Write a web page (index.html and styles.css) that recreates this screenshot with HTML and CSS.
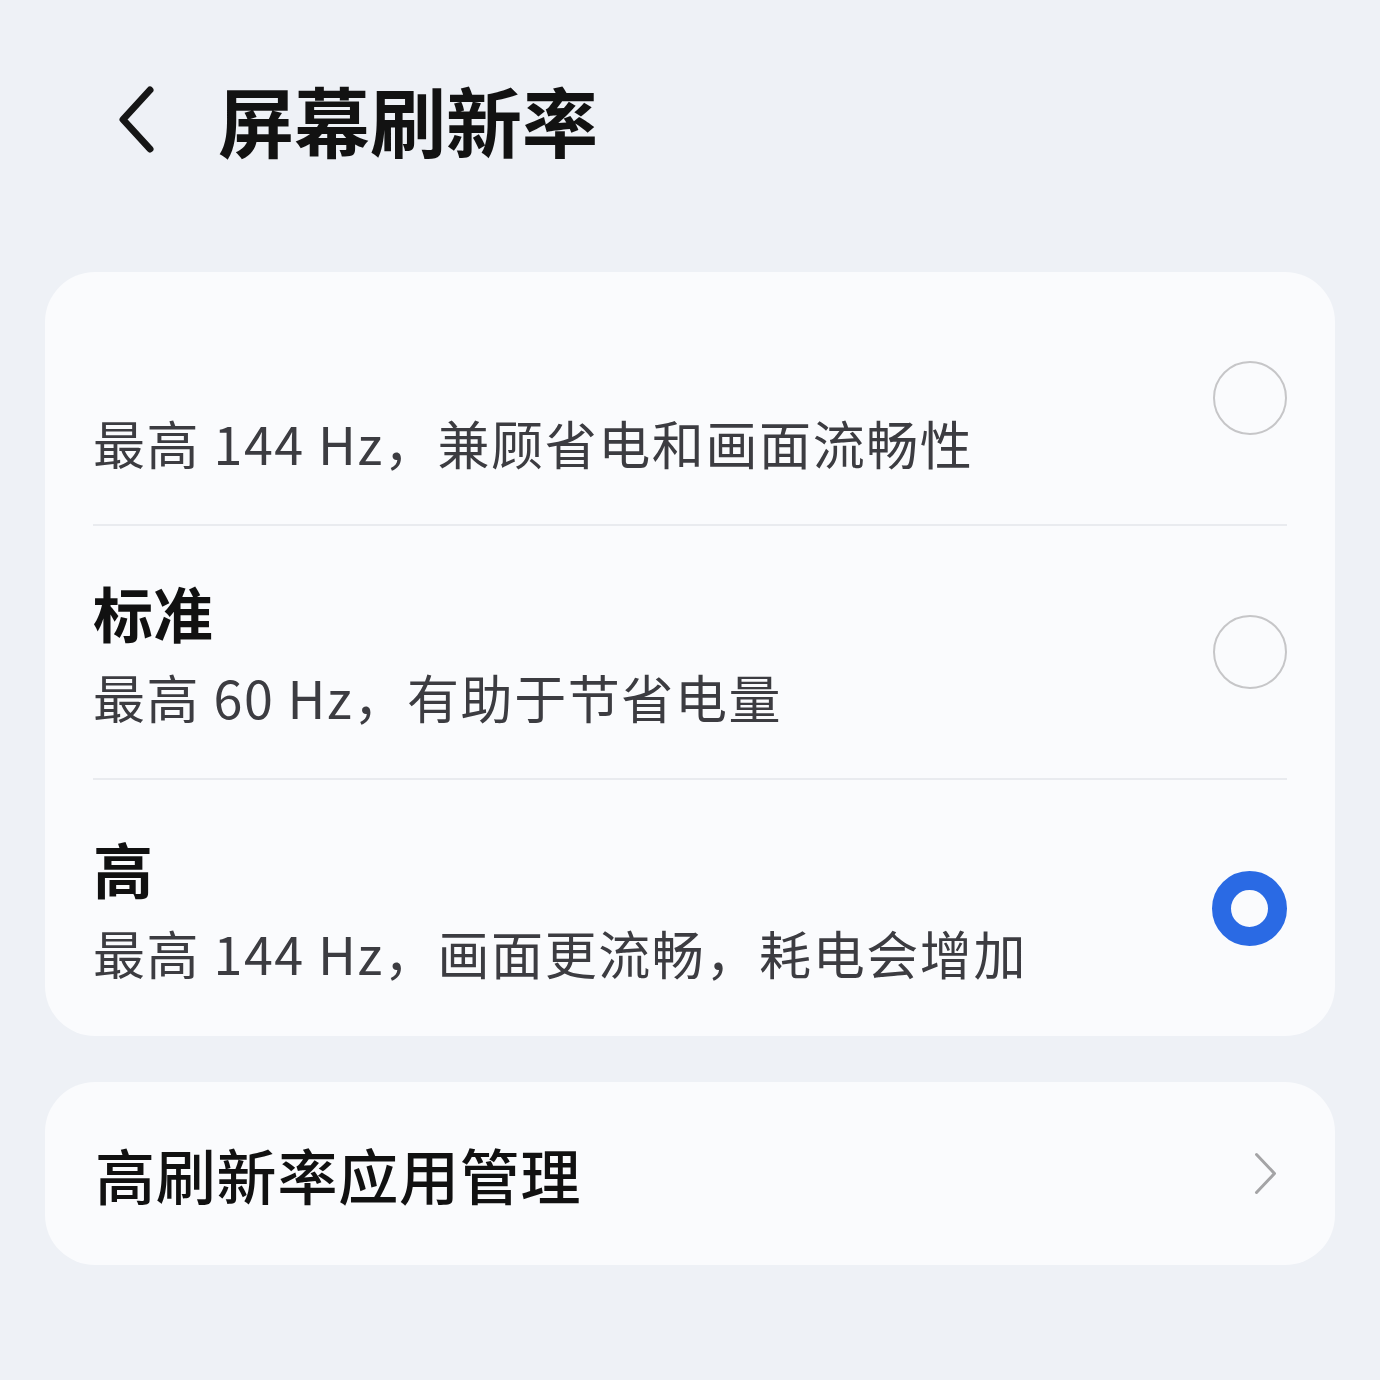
FILE: index.html
```html
<!DOCTYPE html>
<html lang="zh-CN">
<head>
    <meta charset="UTF-8">
    <meta name="viewport" content="width=device-width, initial-scale=1.0">
    <title>屏幕刷新率</title>
    <link rel="stylesheet" href="styles.css">
</head>
<body>
    <header class="top-bar">
        <svg class="back" width="37" height="69" viewBox="0 0 37 69">
            <path d="M32 5 L5 34.5 L32 64" fill="none" stroke="#161616" stroke-width="7" stroke-linecap="round" stroke-linejoin="round"/>
        </svg>
        <h1>屏幕刷新率</h1>
    </header>

    <main>
        <section class="card options">
            <div class="row">
                <div class="text">
                    <div class="title">&nbsp;</div>
                    <div class="sub">最高 144 Hz，兼顾省电和画面流畅性</div>
                </div>
                <span class="radio"></span>
            </div>
            <div class="row">
                <div class="text">
                    <div class="title">标准</div>
                    <div class="sub">最高 60 Hz，有助于节省电量</div>
                </div>
                <span class="radio"></span>
            </div>
            <div class="row">
                <div class="text">
                    <div class="title">高</div>
                    <div class="sub">最高 144 Hz，画面更流畅，耗电会增加</div>
                </div>
                <span class="radio checked"></span>
            </div>
        </section>

        <section class="card link">
            <span class="link-label">高刷新率应用管理</span>
            <svg class="arrow" width="23" height="43" viewBox="0 0 23 43">
                <path d="M2.5 2.5 L20.5 21.5 L2.5 40.5" fill="none" stroke="#a4a4a6" stroke-width="3" stroke-linecap="round" stroke-linejoin="round"/>
            </svg>
        </section>
    </main>
</body>
</html>
```

FILE: styles.css
```css
body {
    font-family: "Noto Sans CJK SC", "Noto Sans", sans-serif;
    margin: 0;
    padding: 0 45px;
    background-color: #eef1f6;
    color: #141414;
}

.top-bar {
    height: 238px;
    display: flex;
    align-items: center;
    padding-left: 73px;
    gap: 63px;
}

.top-bar h1 {
    margin: 0;
    font-size: 76px;
    font-weight: 700;
    line-height: 1;
    color: #121212;
}

main {
    padding-top: 34px;
}

.card {
    background-color: #fafbfd;
    border-radius: 50px;
}

.options {
    padding: 0 48px;
}

.row {
    height: 254px;
    box-sizing: border-box;
    display: flex;
    align-items: center;
    justify-content: space-between;
    border-bottom: 2px solid #e9ebef;
}

.row:last-child {
    border-bottom: none;
    height: 256px;
}

.text {
    padding-top: 6px;
}

.title {
    font-size: 60px;
    font-weight: 700;
    line-height: 84px;
    color: #111;
}

.sub {
    font-size: 52px;
    line-height: 86px;
    letter-spacing: 1.6px;
    color: #3c3c41;
}

.radio {
    width: 74px;
    height: 74px;
    box-sizing: border-box;
    border: 2.5px solid #c6c6c8;
    border-radius: 50%;
    flex-shrink: 0;
}

.radio.checked {
    width: 75px;
    height: 75px;
    border: 19px solid #2a6ae4;
    background-color: #fafbfd;
}

.link {
    margin-top: 46px;
    height: 183px;
    display: flex;
    align-items: center;
    justify-content: space-between;
    padding: 0 58px 0 50px;
}

.link-label {
    font-size: 60px;
    font-weight: 500;
    letter-spacing: 0.8px;
    color: #111;
}
```
